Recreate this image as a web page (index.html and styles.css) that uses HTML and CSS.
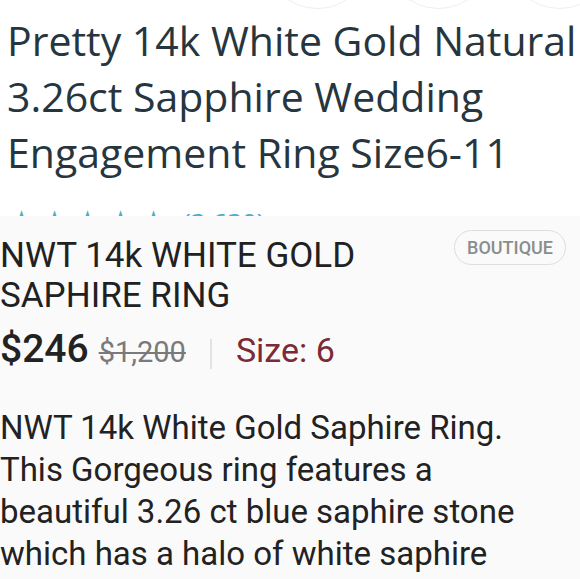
FILE: index.html
```html
<!DOCTYPE html>
<html>
<head>
<meta charset="utf-8">
<link rel="stylesheet" href="styles.css">
</head>
<body>
<div class="top">
  <div class="circles">
    <div class="circle"></div>
    <div class="circle"></div>
    <div class="circle"></div>
  </div>
  <h1 class="big-title">Pretty 14k White Gold Natural<br>3.26ct Sapphire Wedding<br>Engagement Ring Size6-11</h1>
  <div class="rating">
    <span class="star">★</span><span class="star">★</span><span class="star">★</span><span class="star">★</span><span class="star">★</span>
    <span class="count">(3,630)</span>
  </div>
</div>
<div class="panel">
  <div class="head">
    <h2 class="title">NWT 14k WHITE GOLD SAPHIRE RING</h2>
    <span class="badge">BOUTIQUE</span>
  </div>
  <div class="price-row">
    <span class="price">$246</span>
    <span class="orig">$1,200</span>
    <span class="divider"></span>
    <span class="size">Size: 6</span>
  </div>
  <p class="desc">NWT 14k White Gold Saphire Ring.<br>This Gorgeous ring features a<br>beautiful 3.26 ct blue saphire stone<br>which has a halo of white saphire</p>
</div>
</body>
</html>
```
FILE: styles.css
```css
html, body {
  margin: 0;
  padding: 0;
  background: #fafafa;
}
body {
  width: 580px;
  height: 579px;
  overflow: hidden;
}
.top {
  height: 216px;
  overflow: hidden;
  background: #ffffff;
}
.circles {
  display: flex;
  gap: 14px;
  padding-left: 264px;
  margin-top: -98px;
  height: 108px;
}
.circle {
  flex: 0 0 auto;
  width: 105px;
  height: 105px;
  border: 1.5px solid #eceff1;
  border-radius: 50%;
}
.big-title {
  margin: 2px 0 0 0;
  padding: 0 0 0 7px;
  font-family: "Open Sans", sans-serif;
  font-weight: 400;
  font-size: 41px;
  line-height: 56px;
  color: #27363e;
  white-space: nowrap;
}
.rating {
  display: flex;
  align-items: baseline;
  padding-left: 8px;
  margin-top: 21px;
  color: #45afd1;
  font-family: "Open Sans", sans-serif;
  font-size: 30px;
  line-height: 40px;
}
.star {
  width: 33px;
}
.count {
  margin-left: 10px;
  font-size: 26px;
}
.panel {
  background: #fafafa;
  font-family: Roboto, sans-serif;
  color: #222222;
}
.head {
  display: flex;
  justify-content: space-between;
  align-items: flex-start;
  padding: 20px 14px 0 0;
}
.title {
  margin: 0;
  font-weight: 400;
  font-size: 35px;
  line-height: 40px;
  width: 400px;
  color: #212121;
}
.badge {
  margin-top: -6px;
  border: 1.5px solid #dedede;
  border-radius: 18px;
  padding: 0 12px;
  height: 33px;
  line-height: 33px;
  font-size: 18px;
  font-weight: 500;
  color: #8c8c8c;
}
.price-row {
  display: flex;
  align-items: baseline;
  margin-top: 10px;
  line-height: 46px;
}
.price {
  font-size: 39px;
  font-weight: 500;
  color: #222;
}
.orig {
  margin-left: 10px;
  font-size: 29px;
  color: #7a7a7a;
  text-decoration: line-through;
}
.divider {
  align-self: center;
  width: 2px;
  height: 30px;
  background: #e2e2e2;
  margin: 6px 24px 0 24px;
}
.size {
  font-size: 34px;
  color: #7b2a36;
}
.desc {
  margin: 32px 0 0 0;
  font-size: 33px;
  line-height: 42px;
  color: #222;
  white-space: nowrap;
}
```
